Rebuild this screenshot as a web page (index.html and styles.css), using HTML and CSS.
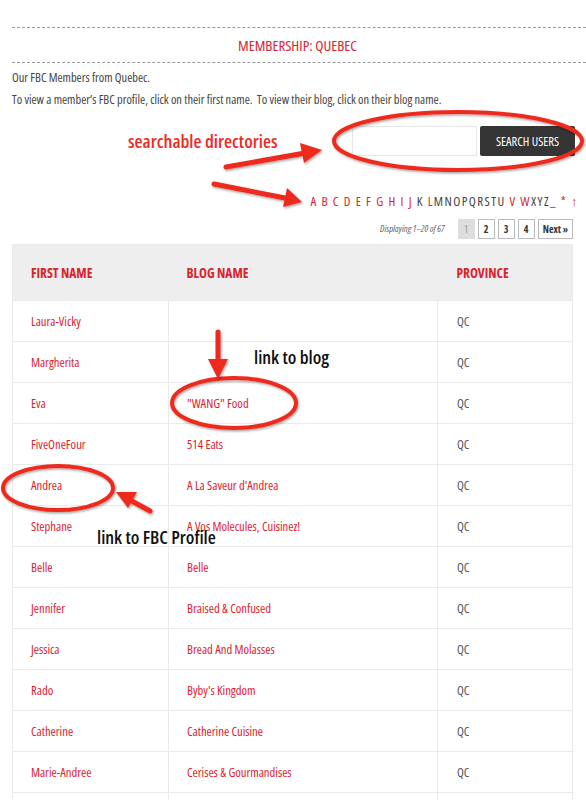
FILE: index.html
```html
<!DOCTYPE html>
<html>
<head>
<meta charset="utf-8">
<link rel="stylesheet" href="styles.css">
</head>
<body>
<div class="page">
  <div class="dash first"></div>
  <h1 class="title">MEMBERSHIP: QUEBEC</h1>
  <div class="dash"></div>
  <p class="intro">Our FBC Members from Quebec.</p>
  <p class="intro">To view a member’s FBC profile, click on their first name.&nbsp; To view their blog, click on their blog name.</p>

  <div class="search">
    <input class="search-input" type="text">
    <button class="search-btn">SEARCH USERS</button>
  </div>

  <div class="alpha">
    <span class="l">A B C D E F G H I J</span> <span class="d">K</span> <span class="l">L</span><span class="d">MNOPQRSTU</span> <span class="l">V W</span><span class="d">XYZ</span><span class="l">_ * ↑</span>
  </div>

  <div class="pager">
    <span class="count">Displaying 1–20 of 67</span>
    <span class="pg cur">1</span>
    <span class="pg">2</span>
    <span class="pg">3</span>
    <span class="pg">4</span>
    <span class="pg">Next »</span>
  </div>

  <table class="members">
    <thead>
      <tr><th class="c1">FIRST NAME</th><th class="c2">BLOG NAME</th><th class="c3">PROVINCE</th></tr>
    </thead>
    <tbody>
      <tr><td>Laura-Vicky</td><td></td><td class="p">QC</td></tr>
      <tr><td>Margherita</td><td></td><td class="p">QC</td></tr>
      <tr><td>Eva</td><td>"WANG" Food</td><td class="p">QC</td></tr>
      <tr><td>FiveOneFour</td><td>514 Eats</td><td class="p">QC</td></tr>
      <tr><td>Andrea</td><td>A La Saveur d'Andrea</td><td class="p">QC</td></tr>
      <tr><td>Stephane</td><td>A Vos Molecules, Cuisinez!</td><td class="p">QC</td></tr>
      <tr><td>Belle</td><td>Belle</td><td class="p">QC</td></tr>
      <tr><td>Jennifer</td><td>Braised &amp; Confused</td><td class="p">QC</td></tr>
      <tr><td>Jessica</td><td>Bread And Molasses</td><td class="p">QC</td></tr>
      <tr><td>Rado</td><td>Byby's Kingdom</td><td class="p">QC</td></tr>
      <tr><td>Catherine</td><td>Catherine Cuisine</td><td class="p">QC</td></tr>
      <tr><td>Marie-Andree</td><td>Cerises &amp; Gourmandises</td><td class="p">QC</td></tr>
      <tr><td>&nbsp;</td><td></td><td class="p"></td></tr>
    </tbody>
  </table>
</div>

<svg class="marks" width="586" height="800" viewBox="0 0 586 800">
  <defs>
    <filter id="sh" x="-10%" y="-10%" width="120%" height="120%">
      <feDropShadow dx="1" dy="1.5" stdDeviation="1.2" flood-color="#000" flood-opacity="0.35"/>
    </filter>
  </defs>
  <g fill="none" stroke="#ee2a1f" stroke-width="4" filter="url(#sh)">
    <ellipse cx="458" cy="141" rx="124" ry="29"/>
    <ellipse cx="234" cy="403" rx="62" ry="25"/>
    <ellipse cx="58" cy="488" rx="55" ry="22"/>
  </g>
  <g fill="#ee2a1f" stroke="#ee2a1f" filter="url(#sh)">
    <line x1="226" y1="167" x2="305" y2="153" stroke-width="5" stroke-linecap="round"/>
    <polygon points="322,150 300,143 304,163" stroke="none"/>
    <line x1="214" y1="184" x2="285" y2="198" stroke-width="5" stroke-linecap="round"/>
    <polygon points="302,202 287,188 283,207" stroke="none"/>
    <line x1="218" y1="332" x2="218" y2="362" stroke-width="5" stroke-linecap="round"/>
    <polygon points="218,379 208,359 228,359" stroke="none"/>
    <line x1="150" y1="511" x2="130" y2="500" stroke-width="5" stroke-linecap="round"/>
    <polygon points="116,492 137,492 128,508" stroke="none"/>
  </g>
</svg>
<div class="note red n1">searchable directories</div>
<div class="note n2">link to blog</div>
<div class="note n3">link to FBC Profile</div>
</body>
</html>
```
FILE: styles.css
```css
* { box-sizing: border-box; }
html, body { margin: 0; padding: 0; background: #fff; }
body {
  font-family: "Open Sans", "Liberation Sans", sans-serif;
  font-stretch: condensed;
  color: #444;
  width: 586px;
  height: 800px;
  overflow: hidden;
  position: relative;
}
.page { padding: 0 13px 0 12px; }
.dash { border-top: 1px dashed #999; margin-right: -13px; }
.dash.first { margin-top: 27px; }
.title {
  margin: 0;
  height: 34px;
  line-height: 34px;
  text-align: center;
  font-size: 15px;
  font-weight: normal;
  color: #d9242f;
  padding-left: 10px;
}
.intro { margin: 7px 0 0; font-size: 12.4px; line-height: 15px; color: #444; }
.intro + .intro { margin-top: 7px; }
.search {
  display: flex;
  justify-content: flex-end;
  gap: 3px;
  margin-top: 19px;
  margin-right: -2px;
}
.search-input {
  width: 125px; height: 30px;
  border: 1px solid #e6e6e6;
  background: #fff;
  margin: 0;
}
.search-btn {
  width: 95px; height: 30px;
  background: #353535;
  color: #fff;
  border: 0;
  border-radius: 2px;
  font-family: inherit;
  font-stretch: condensed;
  font-size: 12.5px;
  margin: 0;
  padding: 0;
}
.alpha {
  text-align: right;
  margin-top: 37px;
  margin-right: -6px;
  font-size: 13px;
  line-height: 16px;
  letter-spacing: 1.4px;
}
.alpha .l { color: #d9242f; }
.alpha .d { color: #444; }
.pager {
  display: flex;
  justify-content: flex-end;
  align-items: center;
  gap: 3px;
  margin-top: 9px;
  height: 21px;
  font-size: 10px;
}
.count { font-style: italic; color: #666; margin-right: 10px; font-size: 9.5px; }
.pg {
  display: inline-flex; align-items: center; justify-content: center;
  min-width: 17px; height: 20px; padding: 0 4px;
  border: 1px solid #bbb; color: #333; font-weight: bold;
  background: #fff;
}
.pg.cur { background: #ddd; border-color: #ddd; color: #999; font-weight: normal; }
.members {
  width: 561px;
  margin-top: 5px;
  border-collapse: collapse;
  border: 1px solid #eaeaea;
  font-size: 12.6px;
}
.members th {
  background: #eeeeee;
  color: #d9242f;
  font-weight: bold;
  text-align: left;
  height: 56px;
  padding: 0 0 0 18px;
  font-size: 13.4px;
}
.members th.c3 { padding-left: 19px; }
.members td {
  height: 41px;
  padding: 0 0 0 18px;
  color: #d9242f;
  border-top: 1px solid #eaeaea;
  border-left: 1px solid #eaeaea;
}
.members td:first-child { border-left: 0; }
.members td.p { color: #555; padding-left: 19px; }
.c1 { width: 156px; }
.c2 { width: 269px; }
.marks { position: absolute; left: 0; top: 0; pointer-events: none; }
.note {
  position: absolute;
  font-family: "Open Sans", "Liberation Sans", sans-serif;
  font-stretch: 75%;
  font-weight: 600;
  font-size: 18.5px;
  line-height: 20px;
  color: #111;
  white-space: nowrap;
}
.note.red { color: #ee2a1f; }
.n1 { left: 128px; top: 131px; }
.n2 { left: 254px; top: 347px; }
.n3 { left: 97px; top: 527px; }
```
